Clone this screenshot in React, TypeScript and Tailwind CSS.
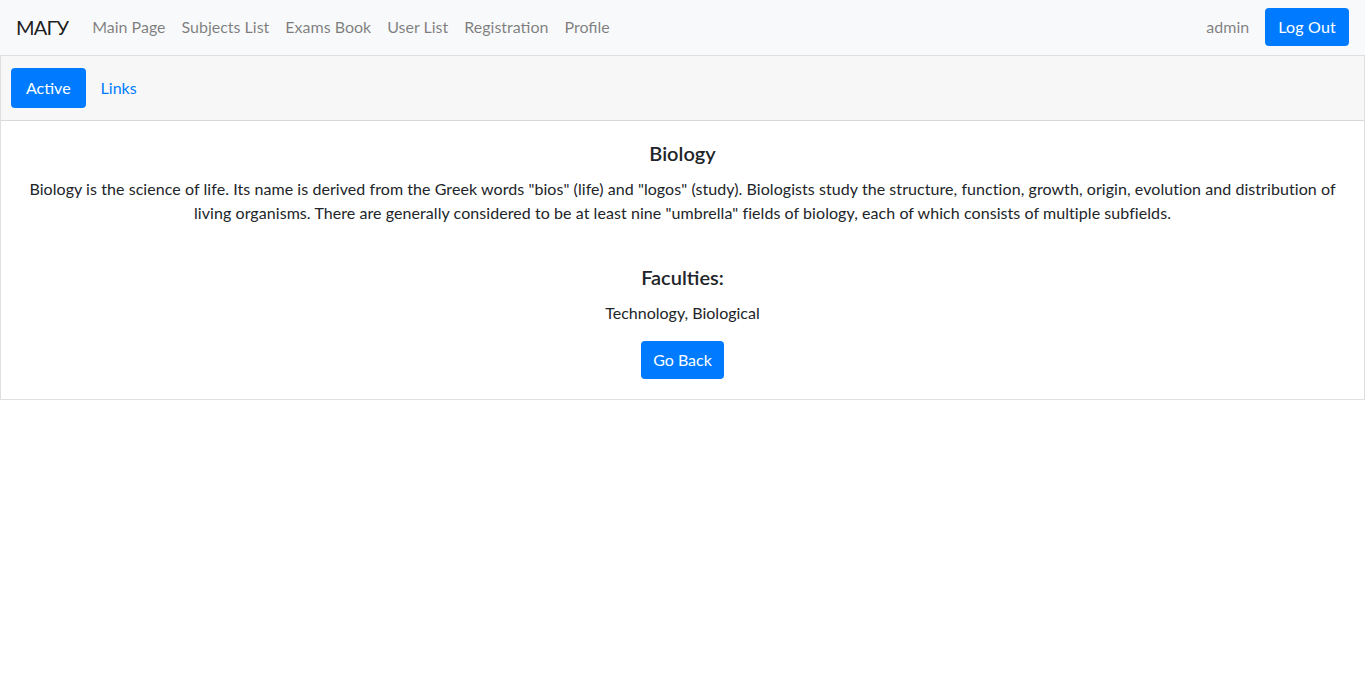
import React from "react";

const NAV_LINKS = ["Main Page", "Subjects List", "Exams Book", "User List", "Registration", "Profile"];

const SubjectDetail: React.FC = () => {
  return (
    <div className="min-h-[699px] bg-white text-[#212529] font-['Lato','Noto_Sans',sans-serif] text-base">
      <nav className="flex h-[55px] items-center justify-between bg-[#f8f9fa] px-4 pb-[2px]">
        <div className="flex items-center">
          <span className="mr-4 text-[20px] leading-[30px] tracking-[-0.8px] text-black/90">МАГУ</span>
          <ul className="flex">
            {NAV_LINKS.map((link) => (
              <li key={link}>
                <a className="block px-2 py-2 leading-6 text-black/50">{link}</a>
              </li>
            ))}
          </ul>
        </div>
        <div className="flex items-center">
          <span className="mr-4 leading-6 text-black/50">admin</span>
          <button className="rounded bg-[#007bff] px-[13px] py-[7px] leading-6 tracking-[0.2px] text-white">
            Log Out
          </button>
        </div>
      </nav>

      <div className="border border-black/[0.125]">
        <div className="border-b border-black/[0.125] bg-[#f7f7f7] px-5 py-3">
          <ul className="-mx-2.5 flex">
            <li>
              <a className="block rounded bg-[#007bff] px-[15px] py-2 leading-6 text-white">Active</a>
            </li>
            <li>
              <a className="block px-[15px] py-2 leading-6 text-[#007bff]">Links</a>
            </li>
          </ul>
        </div>
        <div className="p-5 text-center">
          <h5 className="mb-3 text-[20px] font-semibold leading-6">Biology</h5>
          <p className="mb-4 leading-6 tracking-[0.065px]">
            Biology is the science of life. Its name is derived from the Greek words "bios" (life) and "logos"
            (study). Biologists study the structure, function, growth, origin, evolution and distribution of living
            organisms. There are generally considered to be at least nine "umbrella" fields of biology, each of
            which consists of multiple subfields.
          </p>
          <div className="h-6" />
          <h5 className="mb-3 text-[20px] font-semibold leading-6">Faculties:</h5>
          <p className="mb-4 leading-6">Technology, Biological</p>
          <button className="rounded bg-[#007bff] px-3 py-[7px] leading-6 text-white">Go Back</button>
        </div>
      </div>
    </div>
  );
};

export default function App() {
  return <SubjectDetail />;
}
